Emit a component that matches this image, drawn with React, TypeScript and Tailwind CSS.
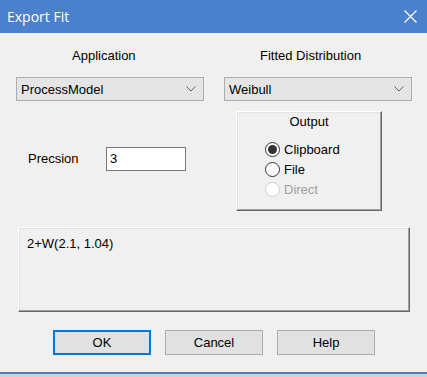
import React from "react";

const Chevron = () => (
  <svg width="10" height="6" viewBox="0 0 10 6" className="block">
    <path d="M0.5 0.5 L5 5 L9.5 0.5" fill="none" stroke="#606060" strokeWidth="1" />
  </svg>
);

const Combo = ({ text, w }: { text: string; w: string }) => (
  <div className={`${w} h-[24px] border border-[#adadad] bg-[#e5e5e5] flex items-center justify-between pl-[4px] pr-[7px]`}>
    <span className="text-[13px] text-black leading-none">{text}</span>
    <Chevron />
  </div>
);

const Radio = ({ label, checked, disabled }: { label: string; checked?: boolean; disabled?: boolean }) => (
  <div className="h-[20px] flex items-center">
    <div
      className={`w-[15px] h-[15px] rounded-full border flex items-center justify-center bg-white ${
        disabled ? "border-[#cccccc] bg-[#f0f0f0]" : "border-[#333333]"
      }`}
    >
      {checked && <div className="w-[9px] h-[9px] rounded-full bg-[#333333]" />}
    </div>
    <span className={`ml-[4px] text-[13px] leading-none ${disabled ? "text-[#a0a0a0]" : "text-black"}`}>{label}</span>
  </div>
);

const Btn = ({ label, def }: { label: string; def?: boolean }) => (
  <div
    className={`w-[98px] h-[25px] flex items-center justify-center bg-[#e1e1e1] text-[13px] text-black ${
      def ? "border-2 border-[#0078d7]" : "border border-[#adadad]"
    }`}
  >
    {label}
  </div>
);

export default function App() {
  return (
    <div
      className="w-[427px] h-[377px] bg-[#f0f0f0] flex flex-col overflow-hidden"
      style={{ fontFamily: '"Liberation Sans", Arial, sans-serif' }}
    >
      <div className="h-[33px] bg-[#4b81cc] flex items-center justify-between pl-[7px] pr-[10px] shrink-0">
        <span className="text-white text-[14px]" style={{ fontFamily: '"Open Sans", "Noto Sans", sans-serif' }}>
          Export Fit
        </span>
        <svg width="13" height="13" viewBox="0 0 13 13">
          <path d="M0.5 0.5 L12.5 12.5 M12.5 0.5 L0.5 12.5" stroke="white" strokeWidth="1.2" />
        </svg>
      </div>

      <div className="flex mt-[15px] h-[15px] items-center text-[13px] text-black leading-none">
        <span className="ml-[72px] w-[188px]">Application</span>
        <span>Fitted Distribution</span>
      </div>

      <div className="flex mt-[14px] ml-[16px] gap-[20px]">
        <Combo text="ProcessModel" w="w-[188px]" />
        <Combo text="Weibull" w="w-[188px]" />
      </div>

      <div className="flex mt-[10px]">
        <div className="flex items-center h-[24px] mt-[36px] ml-[28px] w-[208px]">
          <span className="w-[78px] text-[13px] text-black">Precsion</span>
          <div className="w-[80px] h-[24px] border border-[#7a7a7a] bg-white flex items-center pl-[3px] text-[13px] text-black">
            3
          </div>
        </div>
        <div className="w-[146px] h-[100px] border border-t-white border-l-white border-r-[#696969] border-b-[#696969] shadow-[inset_-1px_-1px_0_#a0a0a0,inset_1px_1px_0_#e3e3e3] flex flex-col">
          <div className="text-center text-[13px] text-black mt-[2px] leading-[15px]">Output</div>
          <div className="ml-[28px] mt-[10px] flex flex-col">
            <Radio label="Clipboard" checked />
            <Radio label="File" />
            <Radio label="Direct" disabled />
          </div>
        </div>
      </div>

      <div className="ml-[18px] mt-[16px] w-[392px] h-[85px] border border-t-white border-l-white border-r-[#696969] border-b-[#696969] shadow-[inset_-1px_-1px_0_#a0a0a0,inset_1px_1px_0_#e3e3e3] pl-[8px] pt-[3px]">
        <span className="text-[13px] text-black leading-[15px]">2+W(2.1, 1.04)</span>
      </div>

      <div className="flex ml-[53px] mt-[18px] gap-[14px]">
        <Btn label="OK" def />
        <Btn label="Cancel" />
        <Btn label="Help" />
      </div>

      <div className="mt-[17px] h-[2px] bg-[#4f7fb4] shrink-0" />
      <div className="flex-1 bg-[#c9d2dc]" />
    </div>
  );
}
